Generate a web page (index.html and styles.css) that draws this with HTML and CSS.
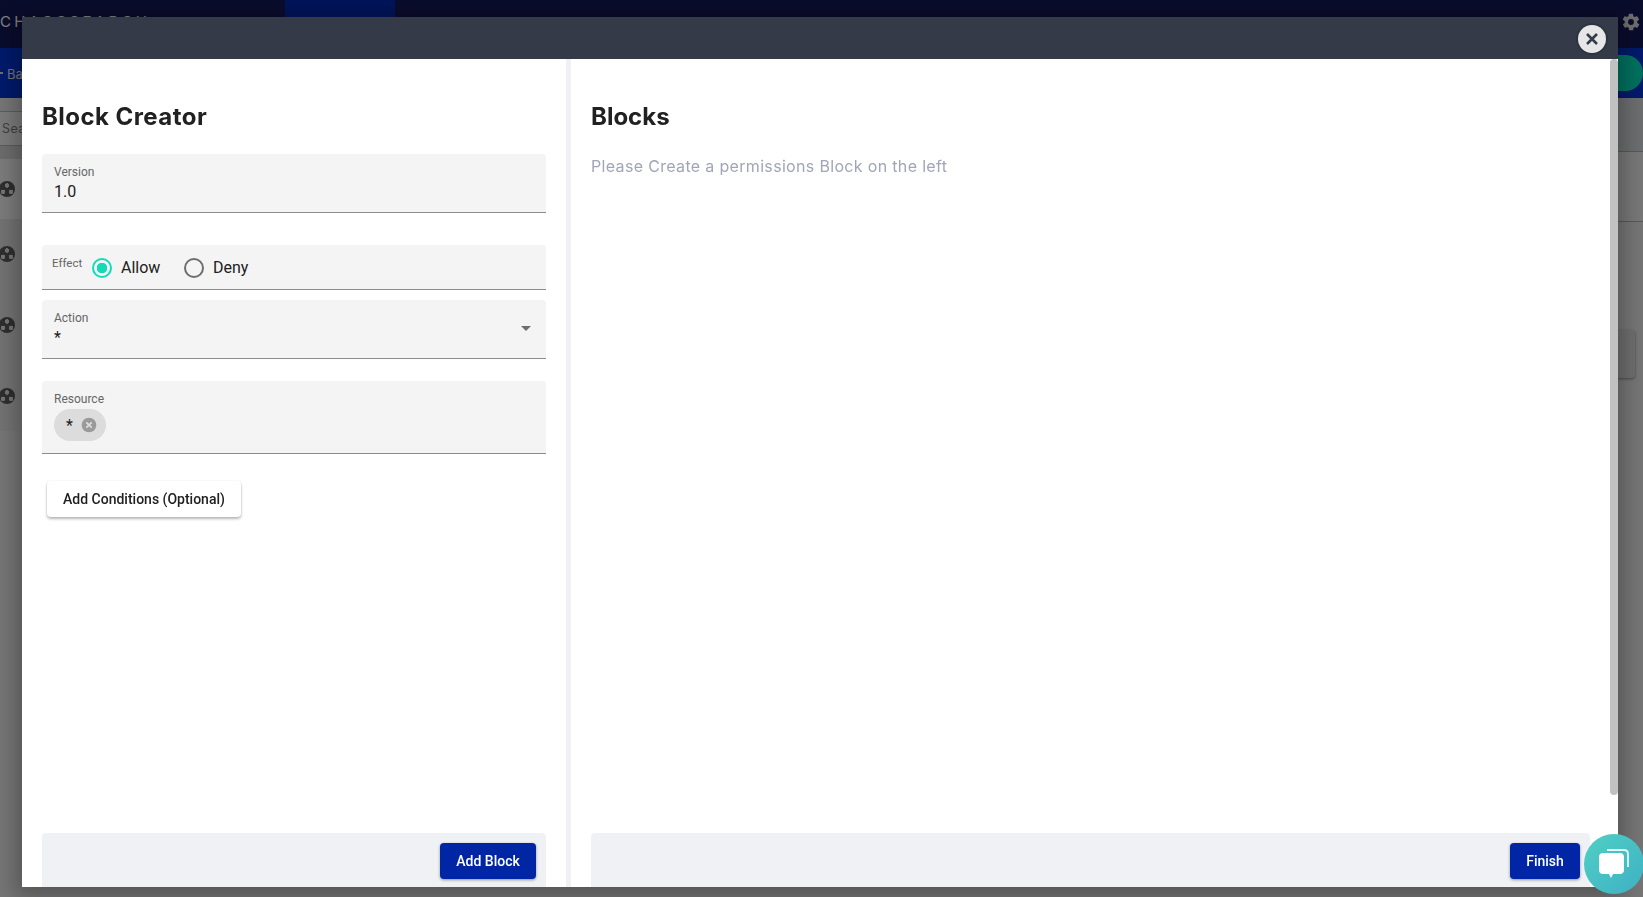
FILE: index.html
```html
<!DOCTYPE html>
<html lang="en">
<head>
<meta charset="utf-8">
<title>Block Creator</title>
<link rel="stylesheet" href="styles.css">
</head>
<body>
<div class="page">
  <header class="topbar">
    <span class="brand">CHAOSSEARCH</span>
    <span class="tab"></span>
    <svg class="gear" viewBox="0 0 24 24"><path d="M19.400 13c0-.3.1-.6.1-1s0-.7-.1-1l2.100-1.600c.2-.2.2-.4.1-.6l-2-3.500c-.1-.2-.4-.3-.6-.2l-2.500 1c-.5-.4-1.100-.7-1.700-1l-.4-2.600c0-.3-.2-.5-.5-.5h-4c-.3 0-.5.2-.5.4l-.4 2.700c-.6.200-1.200.6-1.700 1l-2.500-1c-.2-.1-.5 0-.6.2l-2 3.500c-.1.200-.1.400.1.600L4.600 11c0 .3-.1.700-.1 1s0 .7.1 1l-2.100 1.600c-.2.200-.2.400-.1.600l2 3.500c.1.200.4.300.6.200l2.500-1c.5.400 1.100.7 1.700 1l.4 2.600c0 .3.200.5.500.5h4c.3 0 .5-.2.500-.4l.4-2.700c.6-.2 1.200-.6 1.700-1l2.500 1c.2.100.5 0 .6-.2l2-3.500c.1-.2.100-.4-.1-.6zM12 15.500a3.500 3.500 0 1 1 0-7 3.500 3.500 0 0 1 0 7z"/></svg>
  </header>
  <div class="subbar">
    <span class="arrow"></span>
    <span class="back">Back</span>
    <span class="pill"></span>
  </div>
  <div class="content">
    <aside class="list">
      <div class="search"><span>Search</span></div>
      <div class="band"></div>
      <div class="row row-first"><span class="dot"></span></div>
      <div class="row row-2"><span class="dot"></span></div>
      <div class="row row-3"><span class="dot"></span></div>
      <div class="row row-3"><span class="dot"></span></div>
    </aside>
    <main class="detail">
      <div class="detail-head"></div>
      <div class="detail-row"></div>
      <div class="detail-card"></div>
    </main>
  </div>
</div>

<div class="overlay">
  <section class="modal">
    <div class="modal-head"></div>
    <button class="close" aria-label="Close">
      <svg viewBox="0 0 24 24"><path d="M7 7l10 10M17 7L7 17"/></svg>
    </button>
    <div class="modal-body">
      <div class="panel panel-left">
        <h2>Block Creator</h2>
        <div class="field field-version">
          <label>Version</label>
          <div class="value">1.0</div>
        </div>
        <div class="field field-effect">
          <label class="effect-label">Effect</label>
          <span class="radio on"></span><span class="radio-text">Allow</span>
          <span class="radio"></span><span class="radio-text">Deny</span>
        </div>
        <div class="field field-action">
          <label>Action</label>
          <div class="value small">*</div>
          <span class="caret"></span>
        </div>
        <div class="field field-resource">
          <label>Resource</label>
          <span class="chip">
            <span class="chip-text">*</span>
            <svg class="chip-x" viewBox="0 0 16 16"><circle cx="8" cy="8" r="7.300"/><path d="M5.300 5.300l5.400 5.400M10.700 5.300l-5.400 5.400"/></svg>
          </span>
        </div>
        <button class="btn-light">Add Conditions (Optional)</button>
        <div class="footer"><button class="btn-primary add">Add Block</button></div>
      </div>
      <div class="divider"></div>
      <div class="panel panel-right">
        <h2 class="blocks-title">Blocks</h2>
        <p class="hint">Please Create a permissions Block on the left</p>
        <div class="footer"><button class="btn-primary finish">Finish</button></div>
      </div>
      <div class="scrolltrack"><div class="scrollthumb"></div></div>
    </div>
  </section>
</div>

<div class="chat">
  <svg viewBox="0 0 40 40">
    <path class="chat-back" d="M13 6h17c2.500 0 4 1.500 4 4v13" />
    <path class="chat-front" d="M5 13c0-2.500 1.500-4 4-4h17c2.500 0 4 1.500 4 4v13c0 2.500-1.500 4-4 4h-7l-2 4-2-4H9c-2.500 0-4-1.500-4-4z"/>
  </svg>
</div>
</body>
</html>
```
FILE: styles.css
```css
* { box-sizing: border-box; }
html, body { margin: 0; height: 100%; overflow: hidden; }
body { font-family: Roboto, "Liberation Sans", sans-serif; background: #fff; color: #212121; }

.page { position: relative; height: 897px; background: #eaeaea; overflow: hidden; display: flex; flex-direction: column; }
.topbar { height: 48px; background: #141858; display: flex; align-items: center; position: relative; flex: none; }
.brand { font-family: Inter, sans-serif; font-size: 15px; letter-spacing: 3.300px; color: #fff; margin-top: -5px; line-height: 48px; }
.tab { position: absolute; left: 285px; top: 0; width: 110px; height: 48px; background: #0028b4; }
.gear { position: absolute; left: 1621px; top: 12px; width: 20px; height: 20px; fill: #dcdcdc; }
.subbar { height: 50px; background: #0034d4; position: relative; display: flex; align-items: center; flex: none; }
.arrow { width: 3px; height: 2px; background: #dcdcdc; flex: none; }
.back { color: #e4e4e4; font-family: Inter, sans-serif; font-size: 13px; margin-left: 4px; margin-top: 1px; }
.pill { position: absolute; right: 0; top: 7px; width: 83px; height: 36px; border-radius: 18px; background: #00e0bc; }

.content { flex: 1; display: flex; min-height: 0; }
.list { width: 300px; flex: none; }
.search { height: 35px; margin-top: 13px; border-top: 1px solid #b8b8b8; border-bottom: 1px solid #b8b8b8; padding-left: 2px; display: flex; align-items: center; font-size: 12.500px; letter-spacing: .4px; color: #7d7d7d; font-family: Inter, sans-serif; background: #f4f4f4; }
.band { height: 13px; background: #d8d8d8; }
.row { height: 71px; display: flex; align-items: center; background: #e4e4e4; }
.row-first { height: 60px; background: #f6f6f6; }
.row-2 { height: 70px; }
.dot { width: 16px; height: 16px; margin-left: -1px; border-radius: 50%; background: radial-gradient(circle at 50% 28%, #e8e8e8 0 2px, transparent 2.500px), radial-gradient(circle at 25% 68%, #e8e8e8 0 2px, transparent 2.500px), radial-gradient(circle at 75% 68%, #e8e8e8 0 2px, transparent 2.500px), #5c5c5c; }
.detail { flex: 1; position: relative; background: #eaeaea; }
.detail-head { height: 54px; background: #d8dadc; border-bottom: 1px solid #b0b0b0; }
.detail-row { height: 70px; background: #eeeeee; border-bottom: 1px solid #b0b0b0; }
.detail-card { position: absolute; right: 8px; top: 232px; width: 100px; height: 48px; background: #dcdcdc; border-radius: 4px; box-shadow: 0 1px 3px rgba(0,0,0,.4); }

.overlay { position: fixed; inset: 0; background: rgba(0,0,0,.5); }
.modal { position: absolute; left: 22px; top: 17px; width: 1596px; height: 870px; display: flex; flex-direction: column; box-shadow: 0 4px 20px 6px rgba(0,0,0,.28); background: #fff; }
.modal-head { height: 42px; background: #343a48; flex: none; }
.close { position: absolute; left: 1556px; top: 8px; width: 28px; height: 28px; padding: 0; border: 0; border-radius: 50%; background: #e6e6e6; box-shadow: 0 0 0 2px rgba(0,0,0,.12); display: flex; align-items: center; justify-content: center; }
.close svg { width: 24px; height: 24px; fill: none; stroke: #343a48; stroke-width: 2.600; }

.modal-body { flex: 1; display: flex; min-height: 0; position: relative; }
.panel { position: relative; display: flex; flex-direction: column; }
.panel-left { width: 544px; padding: 0 20px; }
.divider { width: 5px; background: #f0f1f5; flex: none; }
.panel-right { flex: 1; padding: 0 20px; }
.scrolltrack { width: 8px; flex: none; }
.scrollthumb { height: 736px; background: #c1c1c1; border-radius: 4px; }

h2 { margin: 40px 0 0; font-family: Inter, sans-serif; font-weight: 700; font-size: 24px; line-height: 36px; color: #212121; letter-spacing: .45px; }
.blocks-title { letter-spacing: 0; }
.hint { margin: 19px 0 0; font-family: Inter, sans-serif; font-size: 16px; line-height: 24px; color: #a0a6b8; letter-spacing: .33px; }

.field { background: #f4f4f4; border-bottom: 1px solid #8c8c8c; border-radius: 4px 4px 0 0; position: relative; padding: 0 12px; flex: none; }
.field label { display: block; font-size: 12px; line-height: 14px; color: #666; }
.value { font-size: 16px; line-height: 20px; color: #212121; }
.field-version { height: 59px; margin-top: 19px; padding-top: 11px; }
.field-version .value { margin-top: 3px; }
.field-effect { height: 45px; margin-top: 32px; padding: 0 0 0 10px; display: flex; align-items: center; }
.field-effect .effect-label { font-size: 11.500px; margin-top: -9px; width: 33px; flex: none; }
.radio { width: 20px; height: 20px; border: 2px solid #6e6e6e; border-radius: 50%; flex: none; margin-left: 7px; margin-top: 1px; background: #f4f4f4; }
.radio.on { border-color: #12dcb8; background: radial-gradient(circle, #12dcb8 0 5px, transparent 5.500px); }
.radio-text { font-size: 16px; margin-left: 9px; width: 56px; color: #212121; margin-top: 1px; }
.field-action { height: 59px; margin-top: 10px; padding-top: 11px; }
.value.small { font-size: 16px; line-height: 18px; margin-top: 4px; }
.caret { position: absolute; right: 15px; top: 26px; border-left: 5px solid transparent; border-right: 5px solid transparent; border-top: 5px solid #6e6e6e; }
.field-resource { height: 73px; margin-top: 22px; padding-top: 11px; }
.chip { display: inline-flex; align-items: center; width: 52px; height: 32px; margin-top: 3px; border-radius: 16px; background: #dcdcdc; padding-left: 12px; }
.chip-text { font-size: 16px; width: 15px; color: #212121; line-height: 16px; margin-top: 1px; }
.chip-x { width: 16px; height: 16px; }
.chip-x circle { fill: #9a9a9a; }
.chip-x path { stroke: #dcdcdc; stroke-width: 1.800; fill: none; }

button { font-family: Roboto, sans-serif; cursor: pointer; }
.btn-light { align-self: flex-start; margin: 27px 0 0 5px; width: 194px; height: 36px; background: #fff; border: 0; border-radius: 4px; font-size: 14px; font-weight: 500; color: #212121; padding: 0; box-shadow: 0 2px 3px rgba(0,0,0,.28), 0 0 2px rgba(0,0,0,.08); }
.footer { margin-top: auto; height: 54px; background: #f0f1f5; border-radius: 4px 4px 0 0; display: flex; justify-content: flex-end; padding: 10px 10px 0 0; flex: none; }
.btn-primary { height: 36px; border: 0; border-radius: 4px; background: #0026a6; color: #fff; font-size: 14px; font-weight: 500; padding: 0; box-shadow: 0 1px 3px rgba(0,0,0,.4); }
.add { width: 96px; }
.finish { width: 70px; }

.chat { position: fixed; left: 1584px; top: 834px; width: 60px; height: 60px; border-radius: 50%; background: linear-gradient(135deg, #4fd0c4, #3fb0c4); display: flex; align-items: center; justify-content: center; }
.chat svg { width: 40px; height: 40px; }
.chat-front { fill: #fff; }
.chat-back { fill: none; stroke: #fff; stroke-width: 1.800; opacity: .85; }
```
